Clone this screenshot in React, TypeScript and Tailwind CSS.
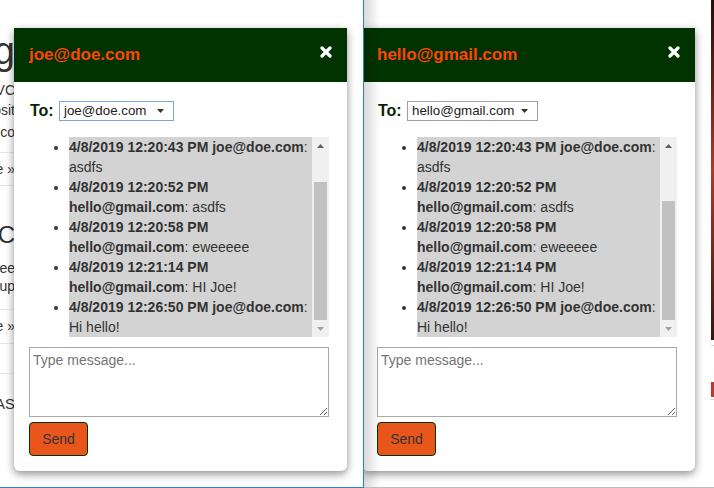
import React from "react";

type Msg = { time: string; from: string; text: string };

const messages: Msg[] = [
  { time: "4/8/2019 12:20:43 PM", from: "joe@doe.com", text: "asdfs" },
  { time: "4/8/2019 12:20:52 PM", from: "hello@gmail.com", text: "asdfs" },
  { time: "4/8/2019 12:20:58 PM", from: "hello@gmail.com", text: "eweeeee" },
  { time: "4/8/2019 12:21:14 PM", from: "hello@gmail.com", text: "HI Joe!" },
  { time: "4/8/2019 12:26:50 PM", from: "joe@doe.com", text: "Hi hello!" },
];

function CloseIcon() {
  return (
    <svg width="12" height="12" viewBox="0 0 12 12" className="block">
      <path d="M2 2L10 10M10 2L2 10" stroke="#fff" strokeWidth="3.2" strokeLinecap="round" />
    </svg>
  );
}

function Tri({ up, color }: { up?: boolean; color: string }) {
  return (
    <svg width="7" height="4" viewBox="0 0 7 4" className="block shrink-0">
      <path d={up ? "M0 4L3.5 0L7 4Z" : "M0 0L7 0L3.5 4Z"} fill={color} />
    </svg>
  );
}

function ChatPopup({
  title,
  selectValue,
  selectClass,
  thumbClass,
}: {
  title: string;
  selectValue: string;
  selectClass: string;
  thumbClass: string;
}) {
  return (
    <div className="w-[333px] rounded-b-[6px] bg-white shadow-[0_3px_9px_rgba(0,0,0,0.45)]">
      <div className="flex h-[54px] justify-between bg-[#003300] px-[15px]">
        <h3 className="self-center text-[17px] font-bold text-[#ff4500]">{title}</h3>
        <span className="mt-[18px] self-start">
          <CloseIcon />
        </span>
      </div>

      <div className="px-[15px] pt-[19px] pb-[15px]">
        <div className="flex items-center leading-[20px]">
          <span className="w-[30px] shrink-0 pl-[1px] text-[16px] font-bold text-[#0d1f00]">To:</span>
          <div className={`flex h-[20px] items-center border bg-white pl-[4px] pr-[9px] text-[13.33px] text-[#222] ${selectClass}`}>
            <span className="whitespace-nowrap">{selectValue}</span>
            <span className="ml-auto">
              <Tri color="#333" />
            </span>
          </div>
        </div>

        <div className="mt-[16px] flex h-[200px] w-[300px] overflow-hidden">
          <ul className="flex-1 list-disc pl-[40px] text-[14px] leading-[20px] text-[#333]">
            {messages.map((m, i) => (
              <li key={i} className="bg-[#d3d3d3]">
                <b>
                  {m.time} {m.from}
                </b>
                : {m.text}
              </li>
            ))}
          </ul>
          <div className="flex w-[17px] flex-col bg-[#f0f0f0]">
            <div className="flex h-[17px] items-center justify-center">
              <Tri up color="#606060" />
            </div>
            <div className="flex-1 px-[2px]">
              <div className={`bg-[#c1c1c1] ${thumbClass}`} />
            </div>
            <div className="flex h-[17px] items-center justify-center">
              <Tri color="#a3a3a3" />
            </div>
          </div>
        </div>

        <textarea
          placeholder="Type message..."
          className="mt-[10px] block h-[70px] w-[300px] resize border border-[#a9a9a9] px-[3px] pt-[4px] text-[14px] leading-[16px] placeholder:text-[#757575]"
        />

        <button className="mt-[5px] block h-[34px] w-[59px] rounded-[4px] border border-[#003300] bg-[#e8561c] text-[14px] text-[#333]">
          Send
        </button>
      </div>
    </div>
  );
}

function Row({ className, children }: { className: string; children: React.ReactNode }) {
  return <div className={`flex justify-end whitespace-nowrap ${className}`}>{children}</div>;
}

export default function App() {
  return (
    <div className="flex h-[488px] w-[714px] overflow-hidden bg-white font-['Liberation_Sans',Arial,sans-serif] text-[#333]">
      {/* left browser window */}
      <div className="relative h-full w-[364px] shrink-0 border-r border-b border-[#2b7fd4]">
        <div className="flex w-[15px] flex-col overflow-hidden">
          <Row className="mt-[31px] h-[40px] text-[38px] leading-[40px]">Messaging</Row>
          <Row className="mt-[10px] h-[18px] text-[14px] leading-[18px]">ASP.NET MVC</Row>
          <Row className="mt-[2px] h-[18px] text-[14px] leading-[18px]">deposit</Row>
          <Row className="mt-[4px] h-[18px] text-[14px] leading-[18px]">
            <span className="mr-[1px] inline-block h-[10px] w-[2px] self-center bg-[#8fd3ee]" />
            co
          </Row>
          <div className="mt-[11px] h-px bg-[#e5e5e5]" />
          <Row className="mt-[7px] h-[18px] text-[14px] leading-[18px]">Learn more »</Row>
          <div className="mt-[7px] h-px bg-[#e5e5e5]" />
          <Row className="mt-[35px] h-[28px] text-[24px] leading-[28px]">Get C</Row>
          <Row className="mt-[10px] h-[18px] text-[14px] leading-[18px]">Free</Row>
          <Row className="h-[18px] text-[14px] leading-[18px]">set up</Row>
          <div className="mt-[14px] h-px bg-[#e5e5e5]" />
          <Row className="mt-[7px] h-[18px] text-[14px] leading-[18px]">Learn more »</Row>
          <div className="mt-[8px] h-px bg-[#e5e5e5]" />
          <div className="mt-[29px] h-px bg-[#e5e5e5]" />
          <Row className="mt-[21px] h-[18px] text-[15px] leading-[18px]">AS</Row>
        </div>

        <div className="absolute top-[28px] left-[14px]">
          <ChatPopup
            title="joe@doe.com"
            selectValue="joe@doe.com"
            selectClass="w-[115px] border-[#7ba7e0]"
            thumbClass="mt-[28px] h-[138px]"
          />
        </div>
      </div>

      {/* right browser window */}
      <div className="relative h-full flex-1 overflow-hidden border-b border-[#bdbdbd]">
        <div className="flex h-full justify-end">
          <div className="flex w-[3px] flex-col">
            <div className="h-[340px] bg-gradient-to-b from-[#2a0a0a] via-[#b33a22] to-[#3a1410]" />
            <div className="mt-[5px] h-px bg-[#cfcfcf]" />
            <div className="mt-[36px] h-[15px] bg-[#c0392b]" />
            <div className="mt-[2px] h-px bg-[#cfcfcf]" />
          </div>
        </div>

        <div className="absolute top-[28px] left-[-2px]">
          <ChatPopup
            title="hello@gmail.com"
            selectValue="hello@gmail.com"
            selectClass="w-[131px] border-[#a0a0a0]"
            thumbClass="mt-[47px] h-[119px]"
          />
        </div>

        {/* shadow cast by the left window */}
        <div className="pointer-events-none absolute inset-y-0 left-0 w-[16px] bg-gradient-to-r from-black/15 to-transparent" />
      </div>
    </div>
  );
}
